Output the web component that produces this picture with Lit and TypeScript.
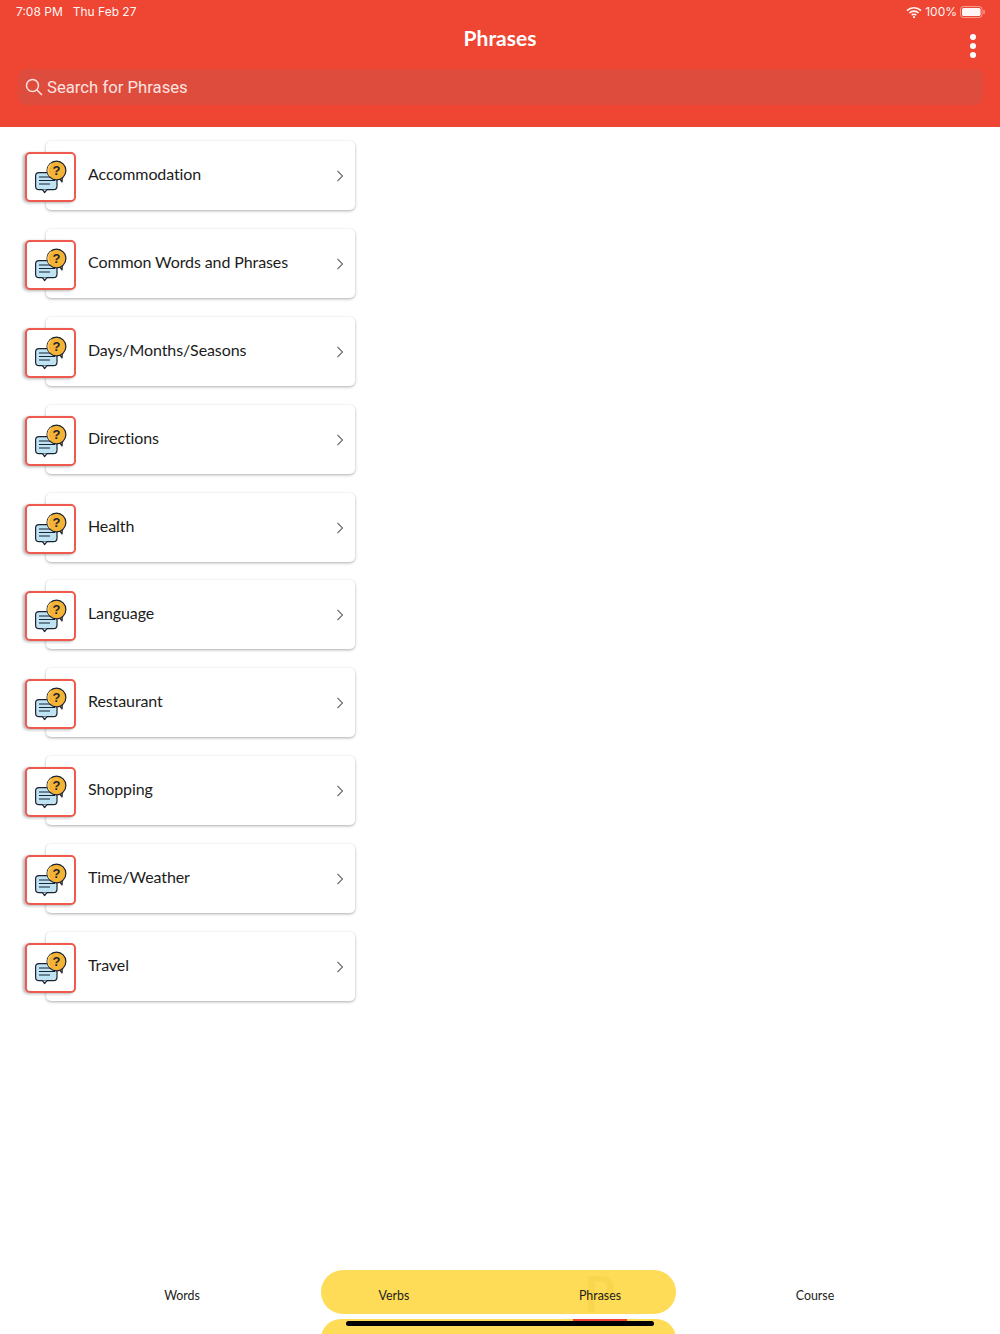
import { LitElement, html, css, svg } from "lit";
import { customElement } from "lit/decorators.js";

const ITEMS = ["Accommodation","Common Words and Phrases","Days/Months/Seasons","Directions","Health","Language","Restaurant","Shopping","Time/Weather","Travel"];

const chatIcon = svg`
  <rect x="9.6" y="19.6" width="21.4" height="17" rx="3.4" fill="#bfe3f2" stroke="#1b2330" stroke-width="1.2"/>
  <path d="M16.5 36.6 L18.6 39.6 L21 36.6" fill="#bfe3f2" stroke="#1b2330" stroke-width="1.2" stroke-linejoin="round"/>
  <path d="M13 24H25M13 27.5H29M13 31H24" stroke="#1b2330" stroke-width="1.2" fill="none"/>
  <path d="M33 25 L36 29 L36.5 22 Z" fill="#f5b335" stroke="#1b2330" stroke-width="1.2" stroke-linejoin="round"/>
  <circle cx="30.5" cy="17.5" r="9.4" fill="#f5b335" stroke="#1b2330" stroke-width="1.2"/>
  <path d="M25.5 10.5 A8.5 8.5 0 0 0 24 23" fill="none" stroke="#f9cf6e" stroke-width="1.4"/>
  <text x="30.5" y="22.4" text-anchor="middle" font-family="Liberation Sans, sans-serif" font-size="13" font-weight="700" fill="#1b2330">?</text>
`;

@customElement("app-root")
export class AppRoot extends LitElement {
  static styles = css`
    :host { display: flex; flex-direction: column; width: 1000px; height: 1334px; background: #fff; font-family: "Lato", "Open Sans", sans-serif; color: #1c1c1c; overflow: hidden; }
    .header { height: 127px; flex: none; background: #ef4533; color: #fff; display: flex; flex-direction: column; box-sizing: border-box; }
    .status { height: 23px; display: flex; align-items: center; justify-content: space-between; padding: 0 15px 0 16px; font: 12px "Inter", "Liberation Sans", sans-serif; color: #fff; opacity: .95; }
    .status .left { display: flex; gap: 10px; }
    .status .right { display: flex; align-items: center; gap: 3px; }
    .titlebar { height: 46px; display: flex; align-items: center; justify-content: center; position: relative; }
    .title { font-size: 21px; font-weight: 700; margin-top: -18px; }
    .more { position: absolute; right: 24px; top: 11px; display: flex; flex-direction: column; gap: 3px; }
    .more i { width: 6px; height: 6px; border-radius: 50%; background: #fff; display: block; }
    .search { margin: 0 17px 0 18px; height: 36px; border-radius: 8px; background: #de4c3d; display: flex; align-items: center; padding-left: 7px; gap: 4px; font: 16.7px "Roboto", "Liberation Sans", sans-serif; color: #fde4e0; }
    .list { display: flex; flex-direction: column; gap: 18.9px; padding: 14px 0 0 25px; }
    .row { position: relative; width: 330px; height: 69px; display: flex; align-items: stretch; }
    .card { margin-left: 21px; width: 309px; box-sizing: border-box; background: #fff; border-radius: 5px; box-shadow: 0 1px 3px rgba(0,0,0,.32); display: flex; align-items: center; padding: 0 11px 0 42px; font-size: 16px; letter-spacing: -.1px; justify-content: space-between; }
    .label { position: relative; top: -2px; }
    .thumb { position: absolute; left: 0; top: 11px; width: 51px; height: 50px; box-sizing: border-box; border: 2px solid #ef5a50; border-radius: 5px; background: #fff; box-shadow: -2px 1px 3px rgba(0,0,0,.3); }
    .thumb svg { display: block; margin: -1px 0 0 -1px; }
    .chev { display: block; margin-top: 1px; }
    .tabs { margin-top: auto; position: relative; height: 64px; flex: none; }
    .pill { position: absolute; left: 321px; width: 355px; background: #fedc57; }
    .pill.one { top: 0; height: 44px; border-radius: 22px; }
    .pill.two { top: 49px; height: 40px; border-radius: 22px; }
    .ghost { position: absolute; left: 584px; top: -7px; font-size: 50px; line-height: 60px; font-weight: 700; color: #fad64e; }
    .labels { position: relative; display: grid; grid-template-columns: 364px 60px 352px 78px; height: 50px; font-size: 12.4px; align-items: center; justify-items: center; }
    .labels span { white-space: nowrap; }
    .red { position: absolute; left: 573px; top: 49px; width: 54px; height: 3px; background: #ef4533; }
    .home { position: absolute; left: 346px; top: 51px; width: 308px; height: 5px; border-radius: 3px; background: #000; }
  `;
  render() {
    return html`
      <div class="header">
        <div class="status">
          <div class="left"><span>7:08 PM</span><span>Thu Feb 27</span></div>
          <div class="right">
            <svg width="16" height="12" viewBox="0 0 16 12"><path d="M1 4.6a10 10 0 0 1 14 0M3.4 7a6.6 6.6 0 0 1 9.2 0M5.7 9.2a3.2 3.2 0 0 1 4.6 0" fill="none" stroke="#fff" stroke-width="1.6"/><circle cx="8" cy="11" r="1.1" fill="#fff"/></svg>
            <span>100%</span>
            <svg width="25" height="12" viewBox="0 0 25 12"><rect x=".5" y=".5" width="21.5" height="11" rx="3" fill="none" stroke="#fff" stroke-opacity=".5"/><rect x="2" y="2" width="18.5" height="8" rx="1.6" fill="#fff"/><rect x="23.4" y="4" width="1.2" height="4" rx=".6" fill="#fff" fill-opacity=".6"/></svg>
          </div>
        </div>
        <div class="titlebar">
          <div class="title">Phrases</div>
          <div class="more"><i></i><i></i><i></i></div>
        </div>
        <div class="search">
          <svg width="18" height="18" viewBox="0 0 18 18"><circle cx="7.5" cy="7.5" r="6" fill="none" stroke="#fde4e0" stroke-width="1.5"/><path d="M12 12l5 5" stroke="#fde4e0" stroke-width="1.5" fill="none"/></svg>
          <span>Search for Phrases</span>
        </div>
      </div>
      <div class="list">
        ${ITEMS.map(t => html`
          <div class="row">
            <div class="card">
              <span class="label">${t}</span>
              <svg class="chev" width="8" height="12" viewBox="0 0 8 12"><path d="M1.5 1l5 5-5 5" fill="none" stroke="#6b6b6b" stroke-width="1.1"/></svg>
            </div>
            <div class="thumb"><svg width="48" height="48" viewBox="0 0 48 48">${chatIcon}</svg></div>
          </div>`)}
      </div>
      <div class="tabs">
        <div class="pill one"></div>
        <div class="pill two"></div>
        <div class="ghost">P</div>
        <div class="labels"><span>Words</span><span>Verbs</span><span>Phrases</span><span>Course</span></div>
        <div class="red"></div>
        <div class="home"></div>
      </div>
    `;
  }
}
